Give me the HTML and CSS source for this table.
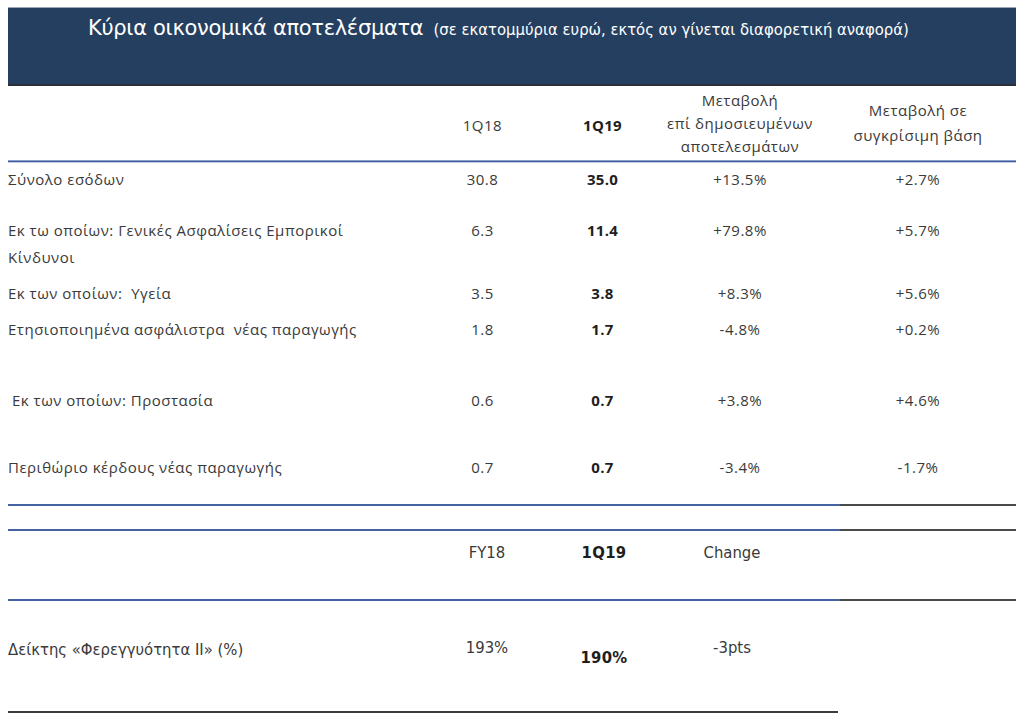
FILE: index.html
```html
<!DOCTYPE html>
<html lang="el">
<head>
<meta charset="utf-8">
<title>Κύρια οικονομικά αποτελέσματα</title>
<link rel="stylesheet" href="styles.css">
</head>
<body>
<div class="page">
  <header class="banner">
    <h1 class="title"><span class="title-main">Κύρια οικονομικά αποτελέσματα</span> <span class="title-sub">(σε εκατομμύρια ευρώ, εκτός αν γίνεται διαφορετική αναφορά)</span></h1>
  </header>

  <div class="row row-head">
    <div class="cell label"></div>
    <div class="cell num">1Q18</div>
    <div class="cell num bold">1Q19</div>
    <div class="cell num multi">Μεταβολή<br>επί δημοσιευμένων<br>αποτελεσμάτων</div>
    <div class="cell num multi multi-2">Μεταβολή σε<br>συγκρίσιμη βάση</div>
  </div>
  <div class="rule rule-blue"></div>

  <div class="body">
    <div class="row r1">
      <div class="cell label">Σύνολο εσόδων</div>
      <div class="cell num">30.8</div>
      <div class="cell num bold">35.0</div>
      <div class="cell num">+13.5%</div>
      <div class="cell num">+2.7%</div>
    </div>
    <div class="row r2">
      <div class="cell label">Εκ τω οποίων: Γενικές Ασφαλίσεις Εμπορικοί Κίνδυνοι</div>
      <div class="cell num">6.3</div>
      <div class="cell num bold">11.4</div>
      <div class="cell num">+79.8%</div>
      <div class="cell num">+5.7%</div>
    </div>
    <div class="row r3">
      <div class="cell label">Εκ των οποίων:&nbsp; Υγεία</div>
      <div class="cell num">3.5</div>
      <div class="cell num bold">3.8</div>
      <div class="cell num">+8.3%</div>
      <div class="cell num">+5.6%</div>
    </div>
    <div class="row r4">
      <div class="cell label">Ετησιοποιημένα ασφάλιστρα&nbsp; νέας παραγωγής</div>
      <div class="cell num">1.8</div>
      <div class="cell num bold">1.7</div>
      <div class="cell num">-4.8%</div>
      <div class="cell num">+0.2%</div>
    </div>
    <div class="row r5">
      <div class="cell label indent">Εκ των οποίων: Προστασία</div>
      <div class="cell num">0.6</div>
      <div class="cell num bold">0.7</div>
      <div class="cell num">+3.8%</div>
      <div class="cell num">+4.6%</div>
    </div>
    <div class="row r6">
      <div class="cell label">Περιθώριο κέρδους νέας παραγωγής</div>
      <div class="cell num">0.7</div>
      <div class="cell num bold">0.7</div>
      <div class="cell num">-3.4%</div>
      <div class="cell num">-1.7%</div>
    </div>
  </div>

  <div class="rule rule-split"></div>
  <div class="gap"></div>
  <div class="rule rule-split"></div>

  <div class="row row-lower r7 narrow">
    <div class="cell label"></div>
    <div class="cell num">FY18</div>
    <div class="cell num bold">1Q19</div>
    <div class="cell num">Change</div>
  </div>
  <div class="rule rule-split"></div>

  <div class="row row-lower r8 narrow">
    <div class="cell label">Δείκτης «Φερεγγυότητα ΙΙ» (%)</div>
    <div class="cell num">193%</div>
    <div class="cell num bold low">190%</div>
    <div class="cell num">-3pts</div>
  </div>
  <div class="rule rule-dark"></div>
</div>
</body>
</html>
```

FILE: styles.css
```css
html, body {
  margin: 0;
  padding: 0;
  background: #ffffff;
}

.page {
  width: 1024px;
  height: 720px;
  padding-top: 7px;
  box-sizing: border-box;
  font-family: "Open Sans", "Noto Sans", sans-serif;
  color: #3a3a3a;
}

.banner {
  margin: 0 8px;
  height: 79px;
  background: #253f60;
  border-top: 1px solid #9aa6b6;
  border-bottom: 2px solid #2b2f36;
  box-sizing: border-box;
  padding: 2px 0 0 80px;
}

.title {
  margin: 0;
  font-weight: normal;
  color: #ffffff;
  font-family: "DejaVu Sans", sans-serif;
  white-space: nowrap;
  line-height: 28px;
}

.title-main {
  font-size: 21px;
  letter-spacing: -0.3px;
}

.title-sub {
  font-size: 16.5px;
  font-stretch: condensed;
}

.row {
  display: grid;
  grid-template-columns: 412px 125px 115px 160px 196px;
  margin-left: 8px;
  width: 1008px;
  font-size: 15px;
  letter-spacing: 0.5px;
  line-height: 27px;
}

.cell.num {
  text-align: center;
}

.bold {
  font-weight: bold;
  color: #1e1e1e;
  letter-spacing: 0.3px;
}

.row-head {
  height: 74px;
  align-items: center;
}

.row-head .num:nth-child(2),
.row-head .num:nth-child(3) {
  padding-top: 4px;
}

.multi {
  line-height: 23px;
}

.multi-2 {
  line-height: 25px;
}

.rule {
  height: 2px;
  margin-left: 8px;
  width: 1008px;
}

.rule-blue {
  background: #3f5a96;
  border-top: 1px solid #8fa2cc;
  border-bottom: 1px solid #c3cfe6;
  height: 1px;
  box-sizing: content-box;
}

.rule-split {
  background: linear-gradient(to right, #4563a0 0, #4563a0 832px, #4a4a4a 832px, #4a4a4a 100%);
}

.rule-dark {
  width: 830px;
  background: #3c3c3c;
}

.body {
  padding-top: 3px;
  height: 341px;
  box-sizing: border-box;
}

.r1 { height: 51px; }
.r2 { height: 63px; }
.r3 { height: 36px; }
.r4 { height: 71px; }
.r5 { height: 67px; }
.r6 { height: 27px; }

.label {
  padding-right: 30px;
}

.indent {
  padding-left: 4px;
}

.gap {
  height: 23px;
}

.row-lower {
  grid-template-columns: 412px 134px 100px 156px 206px;
}

.narrow {
  font-family: "DejaVu Sans", sans-serif;
  font-stretch: condensed;
  font-size: 16.5px;
  letter-spacing: 0;
}

.r7 {
  height: 68px;
  padding-top: 8px;
  box-sizing: border-box;
}

.r8 {
  height: 110px;
  padding-top: 35px;
  box-sizing: border-box;
}

.r8 .num:nth-child(2),
.r8 .num:nth-child(4) {
  margin-top: -2px;
}

.low {
  padding-top: 8px;
}
```
